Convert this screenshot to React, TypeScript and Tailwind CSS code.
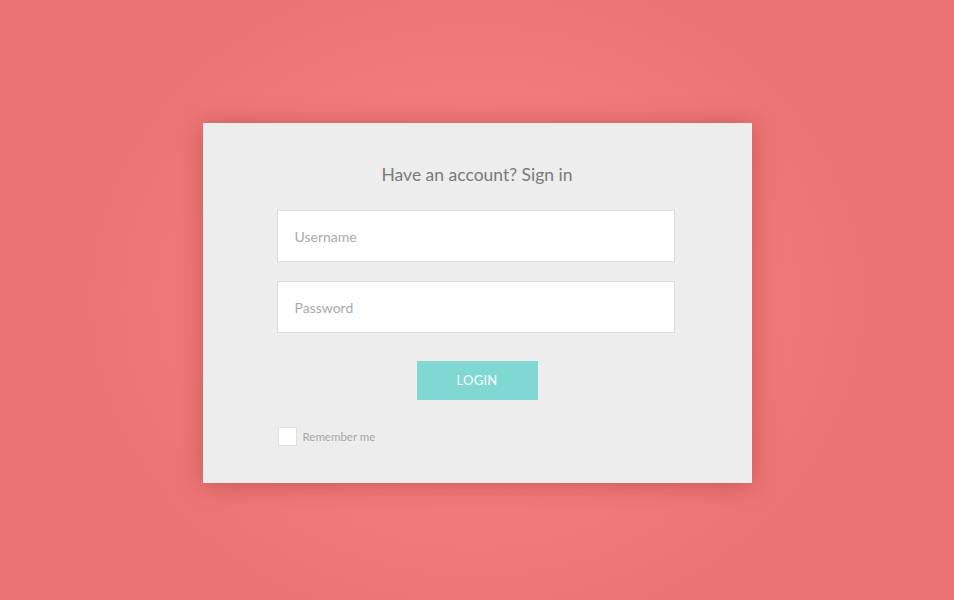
import React from "react";

export default function App() {
  return (
    <div
      className="w-[954px] h-[600px] overflow-hidden flex items-start justify-center bg-[radial-gradient(ellipse_420px_360px_at_50%_50%,#fa8282_0%,#f47c7c_45%,#ec7373_100%)]"
      style={{ fontFamily: "Lato, 'Open Sans', sans-serif" }}
    >
      <div className="mt-[123px] w-[549px] h-[360px] shrink-0 bg-[#ededed] shadow-[0_2px_24px_rgba(120,30,30,0.35)] flex flex-col items-center">
        <h1 className="mt-[40px] text-[17.5px] leading-[24px] text-[#7a7a7a] font-normal">
          Have an account? Sign in
        </h1>
        <div className="mt-[23px] w-[398px] self-start ml-[74px] flex flex-col gap-[19px] shrink-0">
          <div className="h-[52px] bg-white border border-[#dcdcdc] flex items-center pl-[17px] text-[14px] text-[#aaaaaa]">
            Username
          </div>
          <div className="h-[52px] bg-white border border-[#dcdcdc] flex items-center pl-[17px] text-[14px] text-[#aaaaaa]">
            Password
          </div>
        </div>
        <button className="mt-[28px] w-[121px] h-[39px] shrink-0 bg-[#7fd9d2] text-white text-[13px] tracking-[0.3px] flex items-center justify-center">
          LOGIN
        </button>
        <div className="mt-[27px] w-[398px] self-start ml-[75px] flex items-center gap-[6px] shrink-0">
          <div className="w-[19px] h-[19px] bg-white border border-[#e0e0e0]" />
          <span className="text-[11.5px] text-[#a8a8a8]">Remember me</span>
        </div>
      </div>
    </div>
  );
}
